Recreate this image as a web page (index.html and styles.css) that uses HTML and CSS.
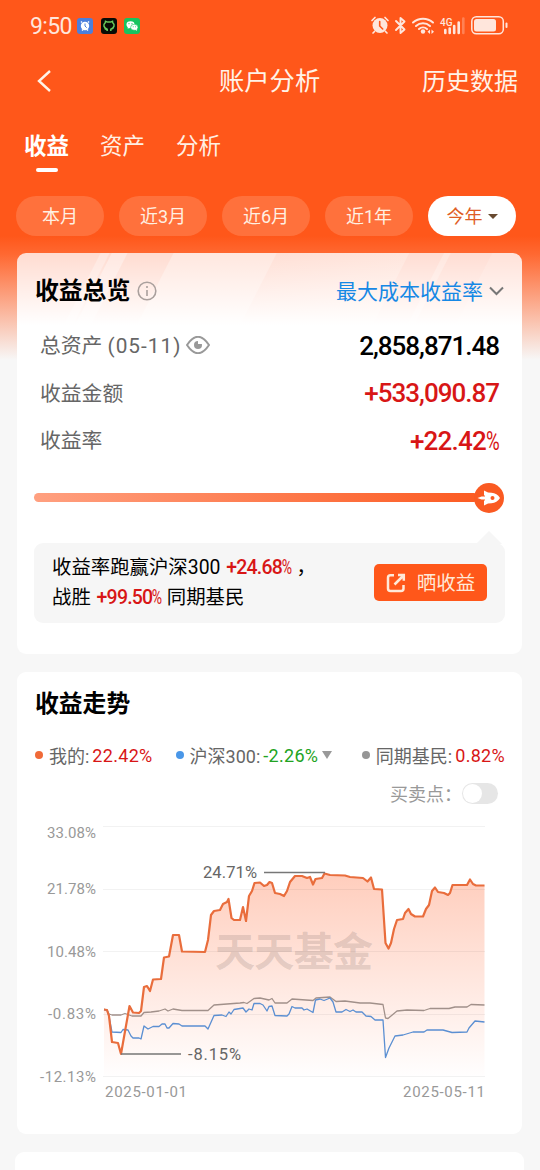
FILE: index.html
```html
<!DOCTYPE html>
<html lang="zh-CN">
  <head>
    <meta charset="UTF-8" />
    <meta name="viewport" content="width=device-width, initial-scale=1.0" />
    <title>账户分析</title>
    <link rel="stylesheet" href="styles.css">
  </head>
  <body>
    <div class="page">
      <div class="status">
        <span class="time">9:50</span>
        <svg class="app" width="16" height="16" viewBox="0 0 16 16">
          <rect width="16" height="16" rx="3" fill="#4b7fdc" />
          <circle cx="8" cy="8" r="4.2" fill="#fff" />
          <path d="M4 4.5l1-1M12 4.5l-1-1M5 12.5l1-1M11 12.5l-1-1" stroke="#fff" stroke-width="1.5" />
          <path d="M8 5.5V8l1.7 1.7" stroke="#4b7fdc" fill="none" />
        </svg>
        <svg class="app" width="16" height="16" viewBox="0 0 16 16">
          <rect width="16" height="16" rx="3" fill="#080c06" />
          <path d="M6.200 13v-1.800C2.200 10 2.200 6 4.200 4.800L4.500 3.300l2 .8h3l2-.8.3 1.500C13.800 6 13.800 10 9.800 11.200V13M3.800 10.500l2.200 1.300" stroke="#69c95a" stroke-width="1.500" fill="none" />
        </svg>
        <svg class="app" width="16" height="16" viewBox="0 0 16 16">
          <rect width="16" height="16" rx="3" fill="#16c45f" />
          <path d="M3.500 10.500l.5-2h3l-.5 1.500z" fill="#fff" />
          <ellipse cx="6.500" cy="6.500" rx="4" ry="3.300" fill="#fff" />
          <ellipse cx="10.300" cy="9.300" rx="3.700" ry="3" fill="#fff" stroke="#16c45f" stroke-width=".6" />
          <path d="M11 11.500l1.800 1.500-.1-2.500z" fill="#fff" />
          <g fill="#16c45f"><circle cx="5" cy="5.700" r=".6" /><circle cx="8" cy="5.700" r=".6" /><circle cx="9.200" cy="8.800" r=".5" /><circle cx="11.600" cy="8.800" r=".5" /></g>
        </svg>
        <svg class="sys" width="140" height="22" viewBox="370 15 140 22">
          <g fill="none" stroke="#ffe6dc" stroke-linecap="round">
            <circle cx="380" cy="25.500" r="7.500" fill="#ffe6dc" stroke="none" />
            <path d="M372 20.500l3-3M388 20.500l-3-3M374.500 31.500l-1.500 1.500M385.500 31.500l1.500 1.500" stroke-width="1.700" />
            <path d="M379.700 21.500v4.500l3 3" stroke="#ff571a" stroke-width="1.600" />
            <path d="M396 21l8.500 8.500-4 3.500v-15l4 3.500L396 30" stroke-width="1.900" stroke-linejoin="round" />
            <path d="M413 22.500a15 15 0 0 1 20 0M416 26a10.500 10.500 0 0 1 14 0M419 29a6 6 0 0 1 8 0" stroke-width="2" />
            <circle cx="423" cy="31.500" r="2.200" fill="#ffe6dc" stroke="none" />
            <path d="M430 29.500l-2.500 2.200 2.500 2.200zM431.500 29.500l2.500 2.200-2.500 2.200z" fill="#ffe6dc" stroke="none" />
            <path d="M445.300 30v3M449.700 28.500v4.500M454.200 26v7M458.700 22.500v10.500" stroke-width="2.600" />
            <path d="M463.300 18.500v14.500" stroke-width="2.600" opacity=".3" />
            <rect x="471.800" y="16.800" width="31.500" height="17" rx="4.500" stroke-width="1.500" />
            <rect x="474" y="19" width="22" height="12.600" rx="2.500" fill="#ffe6dc" stroke="none" />
            <path d="M506.500 23.500v3.500" stroke-width="2" />
          </g>
          <text x="440" y="25.500" class="net">4G</text>
        </svg>
      </div>

      <div class="header">
        <svg class="back" width="16" height="24" viewBox="0 0 16 24"><path d="M14 2L3 12l11 10" /></svg>
        <h1>账户分析</h1>
        <span class="history">历史数据</span>
      </div>

      <div class="tabs">
        <span class="tab active">收益</span>
        <span class="tab">资产</span>
        <span class="tab">分析</span>
      </div>

      <div class="ranges">
        <span class="range">本月</span>
        <span class="range">近3月</span>
        <span class="range">近6月</span>
        <span class="range">近1年</span>
        <span class="range current">今年<i class="caret"></i></span>
      </div>

      <div class="card overview">
        <div class="card-head">
          <h2>收益总览</h2>
          <svg class="info" width="20" height="20" viewBox="0 0 20 20"><circle cx="10" cy="10" r="8.800" /><path d="M10 9v6M10 5v2" /></svg>
          <span class="mode">最大成本收益率</span>
          <svg class="down" width="15" height="10" viewBox="0 0 15 10"><path d="M1 1.500l6.500 6.500L14 1.500" /></svg>
        </div>
        <div class="row">
          <span class="label">总资产 <span class="date">(05-11)</span></span>
          <svg class="eye" width="24" height="18" viewBox="0 0 24 18"><path d="M1 9Q12-7.500 23 9Q12 25.500 1 9z" /><circle cx="12" cy="9" r="4" /><path class="glint" d="M12 4v4h5V4z" /></svg>
          <span class="value">2,858,871.48</span>
        </div>
        <div class="row">
          <span class="label">收益金额</span>
          <span class="value up">+533,090.87</span>
        </div>
        <div class="row">
          <span class="label">收益率</span>
          <span class="value up rate">+22.42<span class="pct">%</span></span>
        </div>
        <div class="progress">
          <div class="track"></div>
          <svg class="rocket" width="30" height="30" viewBox="0 0 30 30">
            <circle cx="15" cy="15" r="15" fill="#fa5a22" />
            <path d="M26 15Q23 10 17.500 9.800L14 9.500 10 7.500V12l1 1v4l-1 1v4.500l4-2 3.500-.3Q23 20 26 15z" fill="#fff" />
            <path d="M3.500 15l4-1.500h4v3h-4z" fill="#fff" />
            <circle cx="18.500" cy="15" r="2" fill="#fa5a22" />
          </svg>
        </div>
        <div class="tip">
          <div class="tip-text">
            <p>收益率跑赢沪深300 <b>+24.68<span class="pct">%</span></b> ，</p>
            <p>战胜 <b>+99.50<span class="pct">%</span></b> 同期基民</p>
          </div>
          <div class="share">
            <svg width="20" height="20" viewBox="0 0 20 20"><path d="M8 2.200H4.500Q2 2.200 2 4.700v10.800Q2 18 4.500 18h10.500Q17.500 18 17.500 15.500V12M8.500 11.500L17 3M12 2h5.800v5.800" /></svg>
            <span>晒收益</span>
          </div>
        </div>
      </div>

      <div class="card trend">
        <h2>收益走势</h2>
        <div class="legend">
          <span class="item mine"><i class="dot orange"></i>我的: <em class="up">22.42%</em></span>
          <span class="item hs"><i class="dot blue"></i>沪深300: <em class="fall">-2.26%</em><i class="caret"></i></span>
          <span class="item peer"><i class="dot grey"></i>同期基民: <em class="up">0.82%</em></span>
        </div>
        <div class="points">
          <span>买卖点：</span>
          <span class="switch"></span>
        </div>
        <svg class="chart" width="470" height="290" viewBox="35 818 470 290">
          <defs>
            <linearGradient id="area" gradientUnits="userSpaceOnUse" x1="0" y1="873" x2="0" y2="1076">
              <stop offset="0" stop-color="#ffcdbc" />
              <stop offset="1" stop-color="#fffefe" />
            </linearGradient>
          </defs>
          <path fill="url(#area)" d="M104 1009.500L107 1010 109 1016 112 1042 118 1043 121 1054 129.500 1006 133 1012.500 139 1013 141 1011 144 987 147 986 150 991 153 979.500 161 979 164 957.500 169 956.500 173 935 179 935 182 951.500 205 952 208 940 211 915 214 911 220 910 223 904 227 902 228.500 899 231.500 918 234 920 240 920 243 907 246 921 249 896 252 891 254.500 883 260 882.500 264 886 267 885 269.500 882 272 883 275 893 280 894 284 896 287 891 290 882 295 876 302 876 307 878 310 877 313 884.500 315.500 879 322 878 324.500 873.500 330 875 345 875.500 350 877 363 878 367.500 881.500 371 877.500 374 889 382 889.500 385.500 943 388.500 948.500 391 943 394 929 397 920 403 919 405 913 408.500 909 411 914 415 916.500 423 916.500 426 909 429 905 432 891 435 887.500 438 892 444 893 448 895 450 893 452.500 885 467 885 470 879.500 473 884 476 885.500 484.500 885.500V1076H104z" />
          <path class="grid" d="M103 826.500H485M103 889.500H485M103 951.500H485M103 1014.500H485M103 1076.500H485" />
          <text class="mark" x="215" y="965.500" textLength="158">天天基金</text>
          <path class="line peer-line" d="M104 1009.500L107 1010 109 1014 112 1015 121 1015 125 1013.500 132 1016 141 1016 144 1012.500 151 1012 159 1011 165 1009 168 1011 173 1009 182 1010.500 208 1010.500 214 1005 240 1003 244 1002.500 247 1003.500 254 998.500 260 998 269 1000 272 998.500 275 1003 287 1003 292 999 313 1000.500 316 998 330 997 336 1001.500 345 1001 360 1003 370 1003 383 1004.500 385.500 1018 388 1018.500 397 1011 407 1010 424 1010.500 430 1008.500 449 1008.500 455 1007 467 1007 471 1004.500 484.500 1005" />
          <path class="line hs-line" d="M104 1009.500L107 1010 109 1016 112 1032 121 1032.500 123 1029.500 128 1030 131 1036 133 1038 139 1038 141 1039 144 1026 148 1029 153 1026.500 159 1026.500 162 1024 165 1024 167 1028 169 1028 173 1023.500 179 1024 182 1026 205 1026 208 1029 214 1015.500 222 1015 226 1016.500 229 1012 231 1014 234 1009.500 243 1008 246 1012 249 1009 252 1010 254 1003.500 260 1003.500 263 1005 267 1011 269 1006.500 272 1006 275 1015.500 287 1016 289 1014 292 1006.500 295 1008 302 1008 304 1010 307 1009 313 1012.500 315.500 1000 320 999 324 1000.500 330 998 333 1002 336 1012 342 1012 346 1009.500 350 1011.500 353 1010 356 1012 362 1012 366 1016 371 1016.500 375 1020 383 1020 385.500 1057.500 389 1048 395 1036 403 1035 413 1032 424 1032 427 1030 443 1030 452 1032.500 467 1032 469 1028 475 1021 484.500 1022" />
          <path class="line my-line" d="M104 1009.500L107 1010 109 1016 112 1042 118 1043 121 1054 129.500 1006 133 1012.500 139 1013 141 1011 144 987 147 986 150 991 153 979.500 161 979 164 957.500 169 956.500 173 935 179 935 182 951.500 205 952 208 940 211 915 214 911 220 910 223 904 227 902 228.500 899 231.500 918 234 920 240 920 243 907 246 921 249 896 252 891 254.500 883 260 882.500 264 886 267 885 269.500 882 272 883 275 893 280 894 284 896 287 891 290 882 295 876 302 876 307 878 310 877 313 884.500 315.500 879 322 878 324.500 873.500 330 875 345 875.500 350 877 363 878 367.500 881.500 371 877.500 374 889 382 889.500 385.500 943 388.500 948.500 391 943 394 929 397 920 403 919 405 913 408.500 909 411 914 415 916.500 423 916.500 426 909 429 905 432 891 435 887.500 438 892 444 893 448 895 450 893 452.500 885 467 885 470 879.500 473 884 476 885.500 484.500 885.500" />
          <path class="leader" d="M264 872.500H325M121 1054H181" />
          <text class="note" x="203" y="878" textLength="54">24.71%</text>
          <text class="note" x="188" y="1060" textLength="53">-8.15%</text>
          <g class="axis">
            <text x="47" y="837.500" textLength="49">33.08%</text>
            <text x="47" y="894" textLength="49">21.78%</text>
            <text x="47" y="956.500" textLength="49">10.48%</text>
            <text x="48" y="1018.500" textLength="48">-0.83%</text>
            <text x="40" y="1081.500" textLength="56">-12.13%</text>
            <text x="105" y="1096.500" textLength="82">2025-01-01</text>
            <text x="403" y="1096.500" textLength="82">2025-05-11</text>
          </g>
        </svg>
      </div>

      <div class="card next"></div>
    </div>
  </body>
</html>
```
FILE: styles.css
```css
* {
  box-sizing: border-box;
}
body {
  margin: 0;
  background-color: #f7f7f7;
  font-family: Roboto, "Noto Sans CJK SC", sans-serif;
  color: #000;
}
h1,
h2,
p {
  margin: 0;
}
em,
i {
  font-style: normal;
}
.page {
  height: 1170px;
  overflow: hidden;
  padding: 0 18px 0 17px;
  background: linear-gradient(#ff571a 0, #ff571a 236px, #ff6831 254px, #f7f7f7 360px);
}
.status {
  height: 52px;
  padding: 0 14px 0 13px;
  display: flex;
  align-items: center;
}
.time {
  width: 47px;
  font-size: 23px;
  letter-spacing: -0.6px;
  color: #ffe6dc;
}
.app {
  margin-right: 7.5px;
}
.sys {
  margin-left: auto;
  margin-right: -2px;
}
.net {
  font-size: 10px;
  font-weight: 500;
  fill: #ffe6dc;
}
.header {
  height: 58px;
  padding: 0 4px 0 19px;
  display: grid;
  grid-template-columns: 183px 1fr auto;
  align-items: center;
  color: #fff3e8;
}
.header h1 {
  font-size: 25.3px;
  font-weight: 400;
  line-height: 36px;
  padding-top: 1px;
}
.back path {
  fill: none;
  stroke: #fff3e8;
  stroke-width: 2.4;
}
.header .history {
  font-size: 24px;
  line-height: 36px;
  padding-top: 1px;
}
.tabs {
  height: 86px;
  padding: 18px 0 0 7px;
  display: flex;
  gap: 31px;
}
.tab {
  font-size: 22.5px;
  line-height: 36px;
  color: #fff0e4;
}
.tab.active {
  font-weight: 700;
  color: #fff;
}
.tab.active::after {
  content: "";
  display: block;
  width: 22px;
  height: 4px;
  margin: 4px auto 0;
  border-radius: 2px;
  background-color: #fff;
}
.ranges {
  display: flex;
  gap: 15px;
  margin-left: -1px;
  margin-right: -2px;
}
.range {
  width: 88px;
  height: 40px;
  padding-bottom: 3px;
  border-radius: 20px;
  display: flex;
  align-items: center;
  justify-content: center;
  font-size: 18px;
  color: #fff0e2;
  background-color: #ff713c;
}
.range.current {
  color: #df5d24;
  background-color: #fff;
}
.range .caret {
  margin-left: 5px;
  margin-top: 3px;
  border: 5.5px solid transparent;
  border-top-color: #684a30;
  border-bottom: 0;
}
.card {
  border-radius: 9px;
  background-color: #fff;
}
.card h2 {
  font-size: 23.8px;
  font-weight: 700;
  line-height: 34px;
}
.overview {
  height: 401px;
  margin-top: 17px;
  padding: 21px 17px 0;
  background-image:
    linear-gradient(rgba(255, 255, 255, 0), #fff 72px),
    linear-gradient(117deg, #ffdcd1 0, #ffdcd1 74px, #ffe6de 75px, #ffe6de 82px, #ffdcd1 83px, #ffdcd1 84px, #ffe8e1 85px, #ffe8e1 98px, #ffdcd1 99px, #ffdcd1 139px, #ffe7df 140px, #ffe7df 231px, #ffdfd5 232px, #ffe5dc 349px, #ffddd3 350px, #ffddd3 380px, #ffe6de 381px, #ffe6de 386px, #ffddd3 387px, #ffddd3 423px, #ffe2d9 424px);
}
.card-head {
  display: flex;
  align-items: center;
  height: 34px;
  padding-left: 1px;
}
.info {
  margin-left: 7px;
  fill: none;
  stroke: #aaa09d;
  stroke-width: 1.6;
}
.mode {
  margin-left: auto;
  padding-bottom: 2px;
  font-size: 21px;
  color: #1688e5;
}
.down {
  margin-left: 6px;
  margin-right: 1px;
  fill: none;
  stroke: #777;
  stroke-width: 2;
}
.row {
  height: 47.5px;
  padding: 0 6px;
  display: flex;
  align-items: center;
}
.card-head + .row {
  margin-top: 14px;
}
.label {
  padding-bottom: 3px;
  font-size: 20.8px;
  color: #666;
}
.date {
  letter-spacing: 1px;
}
.eye {
  margin-left: 5px;
  margin-bottom: 2px;
  fill: none;
  stroke: #999;
  stroke-width: 2;
}
.eye circle {
  fill: #999;
  stroke: none;
}
.eye .glint {
  fill: #fff;
  stroke: none;
}
.value {
  margin-left: auto;
  font-size: 26px;
  font-weight: 500;
  letter-spacing: -1px;
}
.up {
  color: #d81616;
}
.fall {
  color: #22a322;
}
.pct {
  display: inline-block;
  font-weight: 400;
  transform: scaleX(0.72);
  transform-origin: right;
  margin-left: -0.2em;
}
.rate {
  letter-spacing: -0.8px;
}
.progress {
  height: 30px;
  margin-top: 18px;
  display: flex;
  align-items: center;
}
.track {
  flex: 1;
  height: 9px;
  margin-right: -4px;
  border-radius: 5px;
  background: linear-gradient(90deg, #ffa080, #fc5b22);
}
.rocket {
  margin-right: 1px;
}
.tip {
  position: relative;
  height: 80px;
  margin-top: 30px;
  padding: 0 18px;
  display: flex;
  align-items: center;
  justify-content: space-between;
  border-radius: 9px;
  background-color: #f6f6f6;
}
.tip::before {
  content: "";
  position: absolute;
  right: 3px;
  top: -12px;
  border: 13px solid transparent;
  border-top: 0;
  border-bottom-color: #f6f6f6;
}
.tip-text {
  font-size: 19.4px;
  line-height: 30px;
  padding-top: 1px;
  white-space: nowrap;
}
.tip-text b {
  margin-left: 1px;
  font-size: 19.5px;
  font-weight: 500;
  letter-spacing: -0.8px;
  color: #d81616;
}
.share {
  width: 113px;
  height: 37px;
  display: flex;
  align-items: center;
  justify-content: center;
  gap: 11px;
  border-radius: 5px;
  font-size: 19.5px;
  color: #ffe9d8;
  background-color: #ff571a;
}
.share span {
  padding-bottom: 2px;
}
.share svg {
  fill: none;
  stroke: #ffe9d8;
  stroke-width: 2.5;
}
.trend {
  height: 462px;
  margin-top: 18px;
  padding: 15px 17px 0 18px;
}
.legend {
  height: 30px;
  margin-top: 19px;
  display: flex;
  align-items: center;
  font-size: 18px;
  color: #666;
  white-space: nowrap;
}
.item {
  display: flex;
  align-items: center;
}
.hs {
  margin-left: 23px;
}
.hs em {
  letter-spacing: 0.7px;
}
.peer {
  margin-left: auto;
}
.item em {
  margin-left: 3px;
  letter-spacing: 0.3px;
}
.dot {
  width: 8px;
  height: 8px;
  margin-right: 6px;
  border-radius: 50%;
}
.orange {
  background-color: #f06a38;
}
.blue {
  background-color: #4a97e8;
}
.grey {
  background-color: #969696;
}
.item .caret {
  margin-left: 4px;
  border: 5px solid transparent;
  border-top: 8px solid #999;
  border-bottom: 0;
}
.points {
  height: 30px;
  margin-top: 8px;
  padding-right: 7px;
  display: flex;
  align-items: center;
  justify-content: flex-end;
  font-size: 18px;
  color: #999;
}
.switch {
  width: 36px;
  height: 21px;
  padding: 1px;
  border-radius: 11px;
  background-color: #e6e6e6;
}
.switch::before {
  content: "";
  display: block;
  width: 19px;
  height: 19px;
  border-radius: 50%;
  background-color: #fff;
}
.chart {
  display: block;
  margin-top: 10px;
}
.grid {
  stroke: #000;
  stroke-opacity: 0.05;
}
.mark {
  font-size: 40px;
  font-weight: 700;
  fill: #8a7771;
  fill-opacity: 0.24;
}
.line {
  fill: none;
  stroke-linejoin: round;
}
.my-line {
  stroke: #e96d3c;
  stroke-width: 2.2;
}
.hs-line {
  stroke: #5b8fd2;
  stroke-width: 1.3;
}
.peer-line {
  stroke: #a1908a;
  stroke-width: 1.3;
}
.leader {
  stroke: #777;
  stroke-width: 1.5;
}
.note {
  font-size: 16.5px;
  fill: #666;
}
.axis {
  font-size: 15px;
  fill: #999;
}
.next {
  height: 40px;
  margin: 18px -2px 0;
}
```
